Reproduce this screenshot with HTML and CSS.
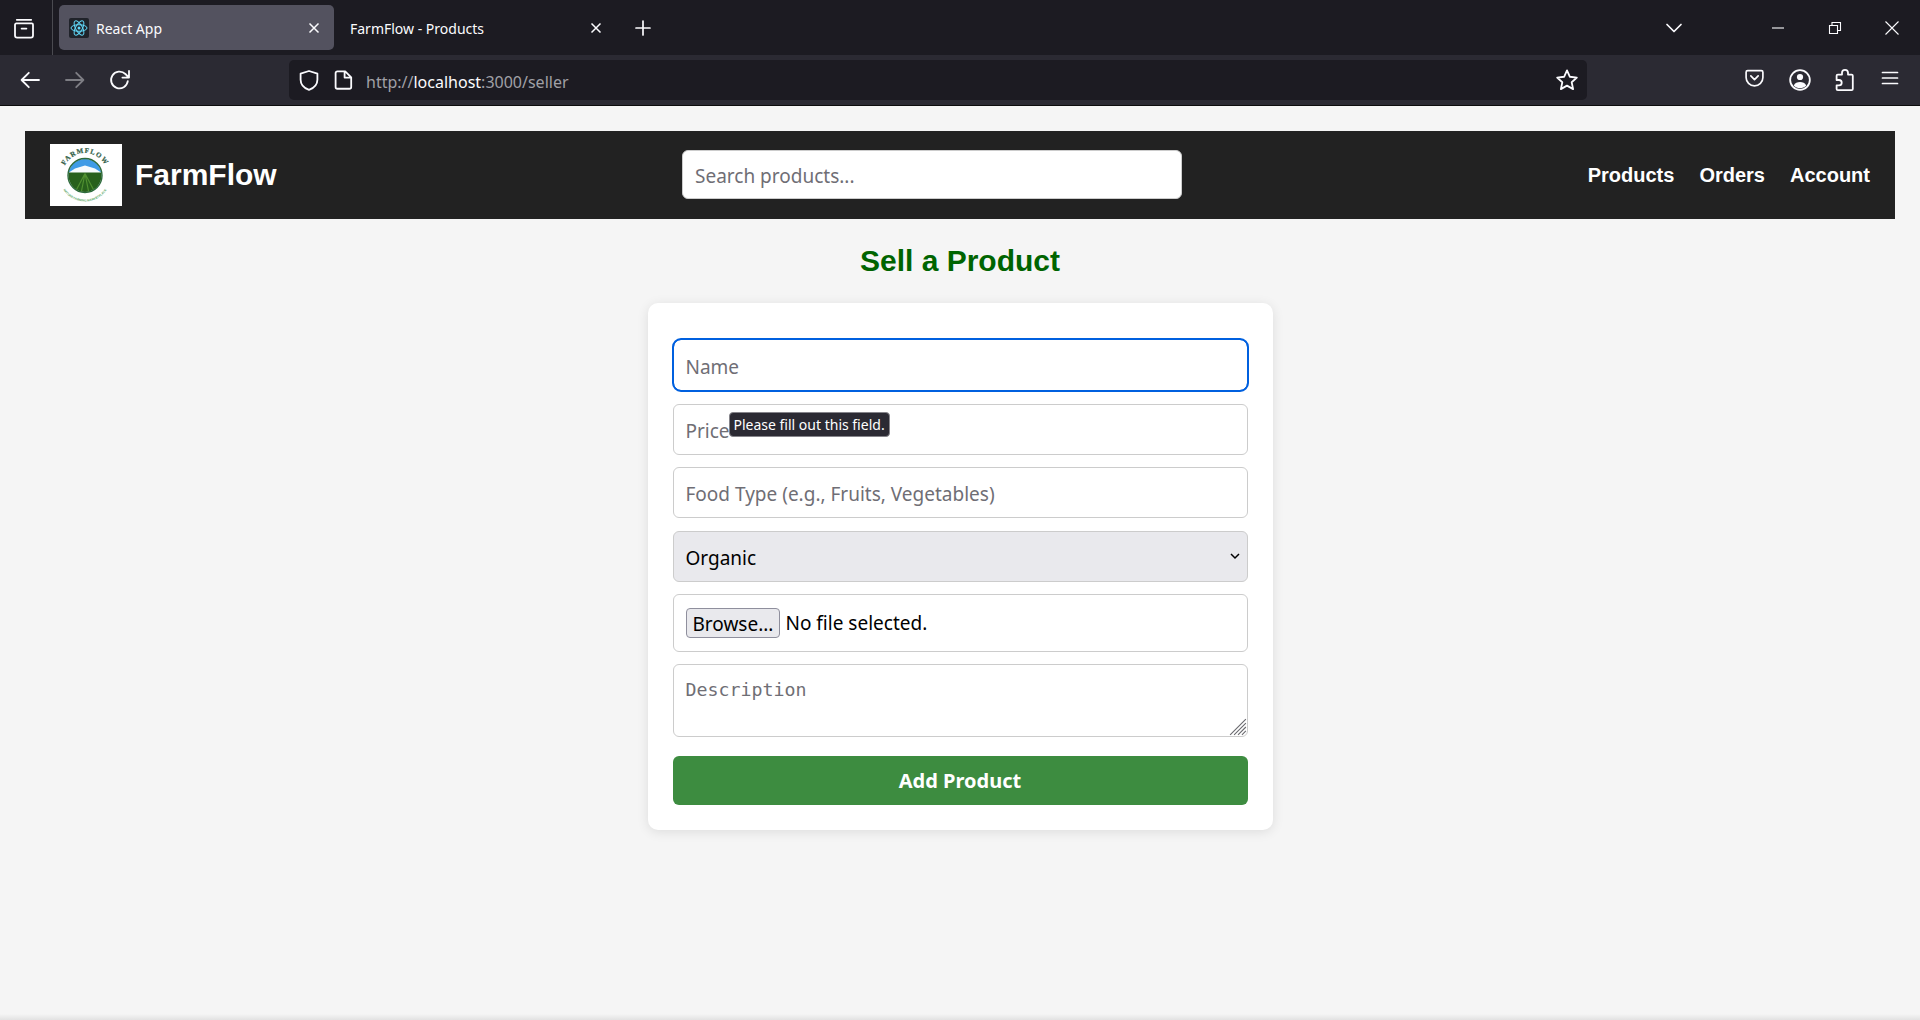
FILE: index.html
```html
<!DOCTYPE html>
<html lang="en">
<head>
    <meta charset="UTF-8">
    <meta name="viewport" content="width=device-width, initial-scale=1.0">
    <title>FarmFlow - Sell a Product</title>
    <link rel="stylesheet" href="styles.css">
</head>
<body>
    <!-- browser chrome -->
    <div class="tabstrip">
        <div class="view-btn">
            <svg class="icon icon-lg" viewBox="0 0 20 20"><path d="M4 3.200h12M3.500 6.200h13a1 1 0 0 1 1 1v9a1.800 1.800 0 0 1-1.800 1.800H4.300a1.800 1.800 0 0 1-1.800-1.800v-9a1 1 0 0 1 1-1zM8 10.500h4"/></svg>
        </div>
        <div class="tab tab-active">
            <span class="favicon">
                <svg viewBox="0 0 20 20"><g fill="none" stroke="#61dafb" stroke-width="1"><ellipse cx="10" cy="10" rx="8" ry="3.300"/><ellipse cx="10" cy="10" rx="8" ry="3.300" transform="rotate(60 10 10)"/><ellipse cx="10" cy="10" rx="8" ry="3.300" transform="rotate(120 10 10)"/></g><circle cx="10" cy="10" r="1.500" fill="#61dafb"/></svg>
            </span>
            <span class="tab-title">React App</span>
            <svg class="tab-close" viewBox="0 0 12 12"><path d="M1.500 1.500l9 9M10.500 1.500l-9 9"/></svg>
        </div>
        <div class="tab tab-next">
            <span class="tab-title">FarmFlow - Products</span>
            <svg class="tab-close" viewBox="0 0 12 12"><path d="M1.500 1.500l9 9M10.500 1.500l-9 9"/></svg>
        </div>
        <div class="new-tab">
            <svg class="icon" viewBox="0 0 20 20"><path d="M10 3v14M3 10h14"/></svg>
        </div>
        <div class="tab-list">
            <svg class="icon" viewBox="0 0 20 20"><path d="M3 6.500l7 7 7-7"/></svg>
        </div>
        <div class="win-btn"><svg class="win-icon" viewBox="0 0 14 14"><path d="M1 7h12"/></svg></div>
        <div class="win-btn"><svg class="win-icon" viewBox="0 0 14 14"><path d="M1.500 4.500h8v8h-8zM4 4.500V1.500h8.500v8h-3"/></svg></div>
        <div class="win-btn"><svg class="win-icon" viewBox="0 0 14 14"><path d="M.5.500l13 13M13.500.500l-13 13"/></svg></div>
    </div>

    <div class="toolbar">
        <div class="tool-btn"><svg class="icon icon-lg" viewBox="0 0 20 20"><path d="M17.500 10H3M9 4l-6 6 6 6"/></svg></div>
        <div class="tool-btn dim"><svg class="icon icon-lg" viewBox="0 0 20 20"><path d="M2.500 10H17M11 4l6 6-6 6"/></svg></div>
        <div class="tool-btn"><svg class="icon icon-lg" viewBox="0 0 20 20"><path d="M16.500 11a7 7 0 1 1-2-6l2.500 2.500M17.500 2.500v5.500h-5.500"/></svg></div>
        <div class="address">
            <svg class="icon icon-lg shield" viewBox="0 0 20 20"><path d="M10 2.500l7 2.200v5c0 4.300-3 7-7 8.500-4-1.500-7-4.200-7-8.500v-5z"/></svg>
            <svg class="icon icon-lg page" viewBox="0 0 20 20"><path d="M4.500 2.800h6.500l5 5v8a1.500 1.500 0 0 1-1.500 1.500h-10A1.500 1.500 0 0 1 3 15.800V4.300a1.500 1.500 0 0 1 1.500-1.500zM10.500 3v5h5"/></svg>
            <span class="url">http://<b>localhost</b>:3000/seller</span>
            <svg class="icon icon-lg star" viewBox="0 0 20 20"><path d="M10 2l2.400 5.300 5.800.700-4.300 3.900 1.200 5.700L10 14.700l-5.100 2.900 1.200-5.700L1.800 8l5.800-.700z"/></svg>
        </div>
        <div class="tool-actions">
            <div class="tool-btn"><svg class="icon icon-md" viewBox="0 0 20 20"><path d="M3.500 2.500h13A1.500 1.500 0 0 1 18 4v5a8 8 0 0 1-16 0V4a1.500 1.500 0 0 1 1.500-1.500zM6.500 7.500l3.500 3.500 3.500-3.500"/></svg></div>
            <div class="tool-btn"><svg class="icon icon-lg" viewBox="0 0 20 20"><circle cx="10" cy="10" r="8.200"/><circle class="solid" cx="10" cy="7.500" r="2.600"/><path class="solid" d="M4.800 14.500c1-2 3-2.800 5.200-2.800s4.200.8 5.200 2.800c-1.400 1.500-3.200 2.300-5.200 2.300s-3.800-.8-5.200-2.300z"/></svg></div>
            <div class="tool-btn"><svg class="icon icon-lg" viewBox="0 0 20 20"><path d="M7.500 5.500V4a2.500 2.500 0 0 1 5 0v1.500h3a1 1 0 0 1 1 1v11a1 1 0 0 1-1 1H4a1 1 0 0 1-1-1v-3h2a2 2 0 0 0 0-4.500H3V6.500a1 1 0 0 1 1-1z"/></svg></div>
            <div class="tool-btn"><svg class="icon" viewBox="0 0 20 20"><path d="M2.500 4.500h15M2.500 10h15M2.500 15.500h15"/></svg></div>
        </div>
    </div>

    <!-- the app -->
    <div class="page-area">
        <nav class="navbar">
            <div class="brand">
                <svg class="logo" viewBox="0 0 72 62">
                    <defs>
                        <clipPath id="lens"><circle cx="35" cy="33" r="16.500"/></clipPath>
                        <path id="arc-top" d="M12.500 33a22.500 22.500 0 0 1 45 0"/>
                        <path id="arc-bottom" d="M9 33a26 26 0 0 0 52 0"/>
                    </defs>
                    <rect width="72" height="62" fill="#fff"/>
                    <g transform="translate(0 -1.500)">
                        <g clip-path="url(#lens)">
                            <rect x="17" y="15" width="36" height="16" fill="#3f9be6"/>
                            <path d="M17 31l8-5 10-3 10 3 8 5v2H17z" fill="#f6fafc"/>
                            <rect x="17" y="30" width="36" height="21" fill="#27601c"/>
                            <path d="M35 31L25 50M35 31l-4 20M35 31l4 20M35 31l10 19" stroke="#4f8f30" stroke-width="1.200"/>
                        </g>
                        <circle cx="35" cy="33" r="17" fill="none" stroke="#2e6b3d" stroke-width="1.400"/>
                        <text class="logo-name"><textPath href="#arc-top" startOffset="50%" text-anchor="middle">FARMFLOW</textPath></text>
                        <text class="logo-sub"><textPath href="#arc-bottom" startOffset="50%" text-anchor="middle">NATURE FARMING MARKETPLACE</textPath></text>
                    </g>
                </svg>
                <span class="brand-name">FarmFlow</span>
            </div>
            <input class="search" type="text" placeholder="Search products...">
            <div class="nav-links">
                <a href="#">Products</a>
                <a href="#">Orders</a>
                <a href="#">Account</a>
            </div>
        </nav>

        <h2 class="page-title">Sell a Product</h2>

        <form class="card">
            <input class="field field-focus" type="text" placeholder="Name">
            <div class="tip-wrap">
                <input class="field" type="text" placeholder="Price">
                <div class="tooltip">Please fill out this field.</div>
            </div>
            <input class="field field-food" type="text" placeholder="Food Type (e.g., Fruits, Vegetables)">
            <div class="select-wrap">
                <select class="field field-select">
                    <option>Organic</option>
                    <option>Non-Organic</option>
                </select>
                <svg class="select-arrow" viewBox="0 0 12 12"><path d="M2 4l4 4 4-4"/></svg>
            </div>
            <div class="field field-file">
                <button class="browse" type="button">Browse...</button>
                <span>No file selected.</span>
            </div>
            <div class="desc-wrap">
                <textarea class="field field-desc" placeholder="Description"></textarea>
                <svg class="grip" viewBox="0 0 16 16"><path d="M15 1L1 15M15 4.500L4.500 15M15 8l-7 7M15 11.500L11.500 15"/></svg>
            </div>
            <button class="submit" type="button">Add Product</button>
        </form>

        <div class="page-edge"></div>
    </div>
</body>
</html>
```

FILE: styles.css
```css
* {
    box-sizing: border-box;
}

body {
    margin: 0;
    height: 100vh;
    display: flex;
    flex-direction: column;
    overflow: hidden;
    background-color: #f5f5f5;
    font-family: "Noto Sans", "Open Sans", sans-serif;
}

/* browser chrome */
.tabstrip {
    height: 55px;
    display: flex;
    align-items: center;
    background-color: #1c1b22;
    color: #fbfbfe;
}

.icon {
    width: 20px;
    height: 20px;
    fill: none;
    stroke: #fbfbfe;
    stroke-width: 1.700;
    stroke-linejoin: round;
    stroke-linecap: round;
}

.icon-md {
    width: 21px;
    height: 21px;
    stroke-width: 1.600;
}

.icon-lg {
    width: 24px;
    height: 24px;
    stroke-width: 1.500;
}

.icon .solid {
    fill: #fbfbfe;
    stroke: none;
}

.view-btn {
    width: 53px;
    height: 55px;
    padding-right: 4px;
    display: flex;
    align-items: center;
    justify-content: center;
    border-right: 1px solid #4a4a50;
}

.tab {
    width: 275px;
    height: 45px;
    padding: 0 14px 0 16px;
    display: flex;
    align-items: center;
    align-self: flex-start;
    margin-top: 5px;
    border-radius: 5px;
    font-size: 14px;
}

.tab-active {
    margin-left: 6px;
    padding-left: 10px;
    background-color: #53525f;
}

.tab-next {
    padding-right: 7px;
}

.favicon {
    width: 20px;
    height: 20px;
    margin-right: 7px;
    background-color: #20232a;
    border-radius: 2px;
    display: flex;
}

.tab-title {
    flex: 1;
    padding-top: 2px;
}

.tab-close {
    width: 12px;
    height: 12px;
    fill: none;
    stroke: #fbfbfe;
    stroke-width: 1.500;
}

.new-tab {
    width: 40px;
    margin-left: 14px;
    display: flex;
    justify-content: center;
}

.tab-list {
    width: 40px;
    margin-left: auto;
    margin-right: 55px;
    display: flex;
    justify-content: center;
}

.win-btn {
    width: 57px;
    display: flex;
    justify-content: center;
}

.win-icon {
    width: 14px;
    height: 14px;
    fill: none;
    stroke: #fbfbfe;
    stroke-width: 1.100;
}

.toolbar {
    height: 51px;
    padding-left: 7px;
    padding-right: 8px;
    display: flex;
    align-items: center;
    background-color: #2b2a33;
    border-bottom: 1px solid #0c0c0d;
}

.tool-btn {
    width: 45px;
    display: flex;
    justify-content: center;
}

.dim .icon {
    opacity: 0.4;
}

.address {
    width: 1298px;
    height: 40px;
    margin-left: 147px;
    padding: 0 8px;
    display: flex;
    align-items: center;
    background-color: #1c1b22;
    border-radius: 5px;
}

.shield {
    margin-right: 11px;
}

.page {
    margin-right: 10px;
}

.url {
    flex: 1;
    padding-top: 3px;
    font-size: 16px;
    color: #a0a0a6;
}

.url b {
    font-weight: normal;
    color: #fbfbfe;
}

.tool-actions {
    margin-left: auto;
    display: flex;
}

/* app */
.page-area {
    flex: 1;
    display: flex;
    flex-direction: column;
    align-items: center;
    background-color: #f5f5f5;
}

.navbar {
    width: 1870px;
    height: 88px;
    margin-top: 25px;
    padding: 0 25px;
    display: flex;
    align-items: center;
    background-color: #222;
}

.brand {
    width: 632px;
    display: flex;
    align-items: center;
}

.logo {
    width: 72px;
    height: 62px;
    margin-right: 13px;
}

.logo-name {
    font-family: "Liberation Serif", serif;
    font-size: 7px;
    font-weight: bold;
    letter-spacing: 1px;
    fill: #2f5d45;
    stroke: #2f5d45;
    stroke-width: 0.200;
}

.logo-sub {
    font-family: "Liberation Sans", sans-serif;
    font-size: 3px;
    font-weight: bold;
    fill: #5aa866;
}

.brand-name {
    font-family: "Liberation Sans", Arial, sans-serif;
    font-size: 30px;
    font-weight: bold;
    color: #fff;
}

.search {
    width: 500px;
    height: 49px;
    margin-bottom: 2px;
    padding: 3px 12px 0;
    border: 1px solid #ccc;
    border-radius: 6px;
    font-family: inherit;
    font-size: 19px;
    background-color: #fff;
}

.nav-links {
    margin-left: auto;
    display: flex;
    gap: 25px;
}

.nav-links a {
    font-family: "Liberation Sans", Arial, sans-serif;
    font-size: 20px;
    font-weight: bold;
    color: #fff;
    text-decoration: none;
}

.page-title {
    margin: 25px 0 25px;
    font-family: "Liberation Sans", Arial, sans-serif;
    font-size: 30px;
    line-height: 34px;
    font-weight: bold;
    color: #006400;
}

.card {
    width: 625px;
    height: 527px;
    padding: 36px 25px 0;
    display: flex;
    flex-direction: column;
    background-color: #fff;
    border-radius: 10px;
    box-shadow: 0 2px 12px rgba(0, 0, 0, 0.1);
}

.field {
    display: block;
    width: 100%;
    height: 51px;
    margin-bottom: 12px;
    padding: 2px 12px 0;
    border: 1px solid #ccc;
    border-radius: 6px;
    font-family: inherit;
    font-size: 19px;
    color: #000;
    background-color: #fff;
}

.field::placeholder,
.search::placeholder {
    color: #6f6e75;
    opacity: 1;
}

.field-focus {
    height: 52px;
    margin-bottom: 13px;
    padding-top: 3px;
    outline: 2px solid #0060df;
    outline-offset: -1px;
    border-color: #0060df;
    border-radius: 8px;
}

.field-food {
    margin-bottom: 13px;
}

.tip-wrap,
.select-wrap,
.desc-wrap {
    position: relative;
}

.tooltip {
    position: absolute;
    left: 56px;
    top: 8px;
    height: 25px;
    padding: 0 4px;
    display: flex;
    align-items: center;
    background-color: #2b2a33;
    border: 1px solid #85848a;
    border-radius: 4px;
    color: #fff;
    font-size: 14px;
    white-space: nowrap;
}

.field-select {
    appearance: none;
    background-color: #e9e9ed;
}

.select-arrow {
    position: absolute;
    right: 7px;
    top: 19px;
    width: 12px;
    height: 12px;
    fill: none;
    stroke: #000;
    stroke-width: 1.500;
}

.field-file {
    height: 58px;
    padding-top: 0;
    display: flex;
    align-items: center;
    gap: 5px;
}

.browse {
    height: 30px;
    padding: 2px 6px 0;
    border: 1px solid #8f8f9d;
    border-radius: 4px;
    background-color: #e9e9ed;
    font-family: inherit;
    font-size: 19px;
    color: #000;
}

.field-desc {
    height: 73px;
    margin-bottom: 19px;
    padding-top: 14px;
    resize: none;
    font-family: "DejaVu Sans Mono", monospace;
    font-size: 18.300px;
}

.grip {
    position: absolute;
    right: 1px;
    bottom: 20px;
    width: 18px;
    height: 18px;
    fill: none;
    stroke: #6b6b70;
    stroke-width: 1;
}

.submit {
    width: 100%;
    height: 49px;
    border: none;
    border-radius: 6px;
    background-color: #3d8c40;
    color: #fff;
    font-family: inherit;
    font-size: 20px;
    font-weight: bold;
}

.page-edge {
    width: 100%;
    height: 6px;
    margin-top: auto;
    background: linear-gradient(#f5f5f5, #e2e2e2);
}
```
